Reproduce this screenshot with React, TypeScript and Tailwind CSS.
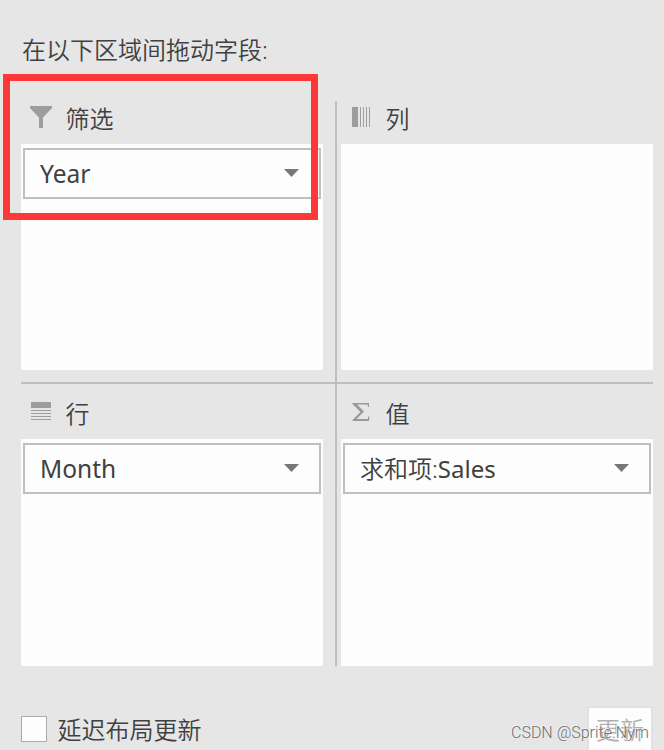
import type { ReactNode } from 'react';

interface AreaHeaderProps {
  icon: ReactNode;
  label: string;
}

interface FieldProps {
  prefix?: string;
  name: string;
}

function FilterIcon() {
  return (
    <svg width="22" height="22" viewBox="0 0 22 22" fill="#9d9d9d">
      <path d="M0 0H22V2L13 11.5V22H9V11.5L0 2Z" />
    </svg>
  );
}

function ColumnsIcon() {
  return (
    <svg width="18" height="20" viewBox="0 0 18 20" fill="#9d9d9d" shapeRendering="crispEdges">
      <path d="M0 0H6V20H0ZM8 0H9V20H8ZM11 0H12V20H11ZM14 0H15V20H14ZM17 0H18V20H17Z" />
    </svg>
  );
}

function RowsIcon() {
  return (
    <svg width="20" height="18" viewBox="0 0 20 18" fill="#9d9d9d" shapeRendering="crispEdges">
      <path d="M0 0H20V6H0ZM0 8H20V9H0ZM0 11H20V12H0ZM0 14H20V15H0ZM0 17H20V18H0Z" />
    </svg>
  );
}

function SumIcon() {
  return (
    <svg width="18" height="18" viewBox="0 0 18 18" fill="#999999">
      <path d="M0.5 0H17V4H16L15.5 1.5H5L12 8.5L4.5 16H15.5L16.5 13.5H17.5L17 18H0.5V17L8.5 9L0.5 1Z" />
    </svg>
  );
}

function AreaHeader({ icon, label }: AreaHeaderProps) {
  return (
    <div className="flex h-9 items-center">
      <div className="mb-1 flex w-[45px] pl-[9px]">{icon}</div>
      <span className="-ml-[0.5px]">{label}</span>
    </div>
  );
}

function Field({ prefix, name }: FieldProps) {
  return (
    <div className="flex h-[51px] items-center justify-between border-2 border-[#bfbfbf] pl-[15px] pr-5">
      <span>
        {prefix}
        <span className={prefix ? 'font-normal' : 'text-[24.5px] font-normal'}>{name}</span>
      </span>
      <svg width="15" height="8" viewBox="0 0 15 8" fill="#777777" className="mb-px">
        <path d="M0 0H15L7.5 8Z" />
      </svg>
    </div>
  );
}

export default function App() {
  return (
    <div className="relative h-[750px] w-[664px] overflow-hidden bg-[#e6e6e6] pl-[21px] pt-8 font-['Noto_Sans','Noto_Sans_CJK_SC',sans-serif] text-[24px] font-[350] leading-9 text-[#404040]">
      <h2 className="h-[69px] pl-px font-[350]">在以下区域间拖动字段:</h2>

      <div className="grid w-[632px] grid-cols-[316px_316px] grid-rows-[283px_282px]">
        <section className="border-b-2 border-r-2 border-[#bfbfbf] pr-3">
          <div className="h-[43px]">
            <AreaHeader icon={<FilterIcon />} label="筛选" />
          </div>
          <div className="h-[226px] bg-[#fdfdfd] px-0.5 pt-1">
            <Field name="Year" />
          </div>
        </section>
        <section className="border-b-2 border-[#bfbfbf] pl-1">
          <div className="h-[43px]">
            <AreaHeader icon={<div className="pl-0.5"><ColumnsIcon /></div>} label="列" />
          </div>
          <div className="h-[226px] bg-[#fdfdfd]" />
        </section>
        <section className="border-r-2 border-[#bfbfbf] pr-3">
          <div className="h-[55px] pt-3">
            <AreaHeader icon={<div className="mb-0.5 pl-px"><RowsIcon /></div>} label="行" />
          </div>
          <div className="h-[227px] bg-[#fdfdfd] px-0.5 pt-1">
            <Field name="Month" />
          </div>
        </section>
        <section className="pl-1">
          <div className="h-[55px] pt-3">
            <AreaHeader icon={<div className="pl-0.5"><SumIcon /></div>} label="值" />
          </div>
          <div className="h-[227px] bg-[#fdfdfd] px-0.5 pt-1">
            <Field prefix="求和项:" name="Sales" />
          </div>
        </section>
      </div>

      <div className="flex w-[632px] items-start justify-between pt-10">
        <label className="flex items-start pt-[5px]">
          <span className="mt-[5px] h-[26px] w-[26px] border border-[#ababab] bg-[#fdfdfd]" />
          <span className="pl-[10.5px] pt-px">延迟布局更新</span>
        </label>
        <button className="h-[52px] w-[66px] border-2 border-[#e1e1e1] bg-[#fdfdfd] pb-1 text-[#b1b1b1]">更新</button>
      </div>

      {/* highlight around the filter area */}
      <div className="absolute left-[3px] top-[74px] h-[146px] w-[315px] border-[7px] border-[#fc3838]" />
      <span className="absolute left-[511px] top-[723px] whitespace-nowrap font-['Roboto',sans-serif] text-[16px] font-light leading-5 text-[#707070] [text-shadow:-1px_-1px_0_#f4f4f4]">
        CSDN @Sprite.Nym
      </span>
    </div>
  );
}
